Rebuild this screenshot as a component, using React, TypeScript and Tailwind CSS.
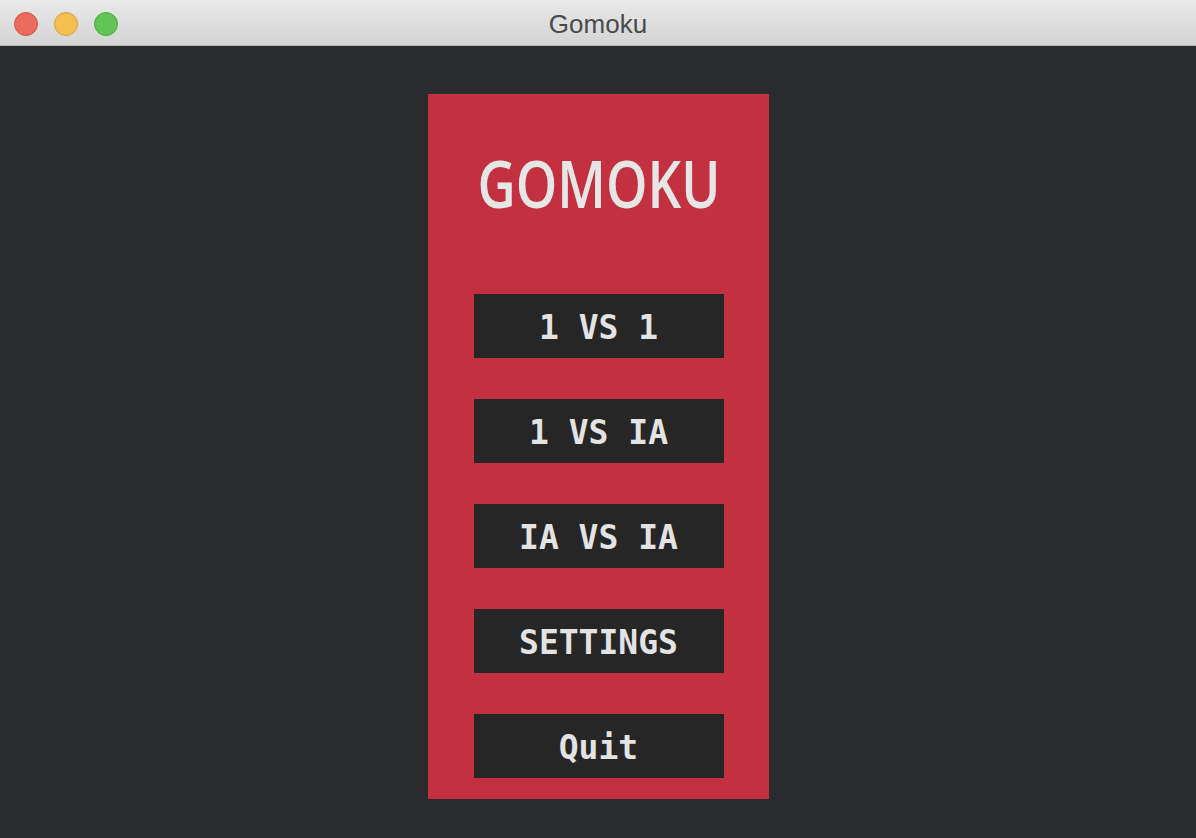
import React from "react";

const buttons = ["1 VS 1", "1 VS IA", "IA VS IA", "SETTINGS", "Quit"];

export default function App() {
  return (
    <div className="w-[1196px] h-[838px] flex flex-col bg-[#2a2b2f] overflow-hidden">
      <div className="h-[46px] shrink-0 relative flex items-center justify-center bg-gradient-to-b from-[#e9e9e9] to-[#d4d4d4] border-b border-[#b8b8b8]">
        <div className="absolute left-[14px] top-[12px] flex gap-[16px]">
          <div className="w-[24px] h-[24px] rounded-full bg-[#ed6a5e] border border-[#d05548]" />
          <div className="w-[24px] h-[24px] rounded-full bg-[#f5bf4f] border border-[#d6a23d]" />
          <div className="w-[24px] h-[24px] rounded-full bg-[#61c554] border border-[#4fa842]" />
        </div>
        <span className="text-[26px] text-[#4a4a4a] font-['Liberation_Sans',sans-serif] leading-none pt-[2px]">Gomoku</span>
      </div>
      <div className="flex-1 flex justify-center pt-[48px]">
        <div className="w-[341px] h-[705px] bg-[#c33040] flex flex-col items-center pl-[1px]">
          <div className="h-[200px] w-full flex items-center justify-center pb-[24px]">
            <h1 className="text-[66px] leading-none font-semibold text-[#e6e6e6] font-['Open_Sans',sans-serif] scale-x-[0.8]">
              GOMOKU
            </h1>
          </div>
          <div className="flex flex-col gap-[41px]">
            {buttons.map((b) => (
              <div
                key={b}
                className="w-[250px] h-[64px] bg-[#262626] flex items-center justify-center pt-[3px] text-[33px] font-bold text-[#e3e3e3] font-['DejaVu_Sans_Mono',monospace] whitespace-pre"
              >
                {b}
              </div>
            ))}
          </div>
        </div>
      </div>
    </div>
  );
}
